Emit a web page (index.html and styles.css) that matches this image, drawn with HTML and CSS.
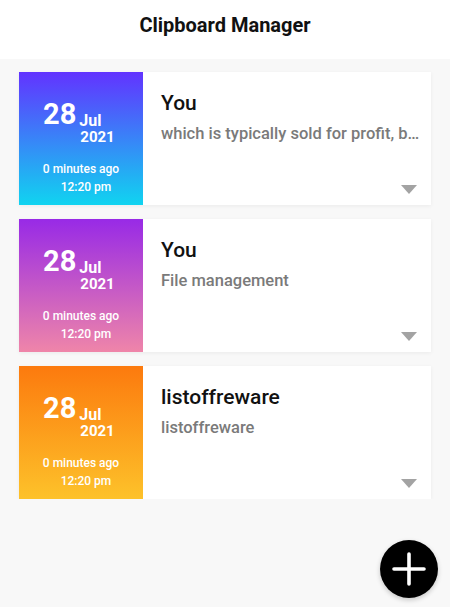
FILE: index.html
```html
<!DOCTYPE html>
<html lang="en">
<head>
    <meta charset="UTF-8">
    <meta name="viewport" content="width=device-width, initial-scale=1.0">
    <title>Clipboard Manager</title>
    <link rel="stylesheet" href="styles.css">
</head>
<body>

    <header>
        <h1>Clipboard Manager</h1>
    </header>

    <div class="list">
        <div class="card">
            <div class="stamp blue">
                <div class="date">
                    <span class="day">28</span>
                    <div class="month-year">
                        <span class="month">Jul</span>
                        <span class="year">2021</span>
                    </div>
                </div>
                <div class="ago">0 minutes ago</div>
                <div class="time">12:20 pm</div>
            </div>
            <div class="content">
                <div class="title">You</div>
                <div class="text">which is typically sold for profit, but can be distributed for free</div>
                <span class="arrow"></span>
            </div>
        </div>

        <div class="card">
            <div class="stamp pink">
                <div class="date">
                    <span class="day">28</span>
                    <div class="month-year">
                        <span class="month">Jul</span>
                        <span class="year">2021</span>
                    </div>
                </div>
                <div class="ago">0 minutes ago</div>
                <div class="time">12:20 pm</div>
            </div>
            <div class="content">
                <div class="title">You</div>
                <div class="text">File management</div>
                <span class="arrow"></span>
            </div>
        </div>

        <div class="card">
            <div class="stamp orange">
                <div class="date">
                    <span class="day">28</span>
                    <div class="month-year">
                        <span class="month">Jul</span>
                        <span class="year">2021</span>
                    </div>
                </div>
                <div class="ago">0 minutes ago</div>
                <div class="time">12:20 pm</div>
            </div>
            <div class="content">
                <div class="title">listoffreware</div>
                <div class="text">listoffreware</div>
                <span class="arrow"></span>
            </div>
        </div>
    </div>

    <button class="fab" aria-label="Add">
        <svg width="34" height="34" viewBox="0 0 34 34">
            <path d="M17 2 V32 M2 17 H32" stroke="white" stroke-width="3.6" stroke-linecap="round" fill="none"/>
        </svg>
    </button>

</body>
</html>
```

FILE: styles.css
```css
body {
    font-family: Roboto, "Liberation Sans", sans-serif;
    background-color: #f8f8f8;
    margin: 0;
}
header {
    height: 59px;
    box-sizing: border-box;
    padding-top: 13px;
    background-color: white;
}
h1 {
    margin: 0;
    text-align: center;
    font-size: 20px;
    line-height: 24px;
    font-weight: bold;
    color: #111;
}
.list {
    display: flex;
    flex-direction: column;
    gap: 14px;
    padding: 13px 19px 0;
}
.card {
    display: flex;
    height: 133px;
    background-color: white;
    box-shadow: 0 1px 4px rgba(0, 0, 0, 0.06);
}
.stamp {
    width: 124px;
    flex-shrink: 0;
    box-sizing: border-box;
    padding-top: 28px;
    color: white;
}
.blue {
    background: linear-gradient(to bottom, #6233ff, #10d4f0);
}
.pink {
    background: linear-gradient(to bottom, #982ae6, #ef85a9);
}
.orange {
    background: linear-gradient(to bottom, #fc7a0e, #fdc22a);
}
.date {
    display: flex;
    padding-left: 24px;
}
.day {
    font-size: 29px;
    line-height: 28px;
    font-weight: bold;
}
.month-year {
    display: flex;
    flex-direction: column;
    padding-top: 12px;
    margin-left: 3px;
    font-weight: bold;
}
.month {
    font-size: 16px;
    line-height: 17px;
}
.year {
    font-size: 15px;
    line-height: 16px;
    margin-left: 1px;
}
.ago {
    margin-top: 15px;
    text-align: center;
    font-size: 12px;
    line-height: 18px;
    font-weight: 500;
}
.time {
    text-align: center;
    padding-left: 10px;
    font-size: 12px;
    line-height: 18px;
    font-weight: 500;
}
.content {
    flex: 1;
    min-width: 0;
    display: flex;
    flex-direction: column;
    padding: 19px 6px 11px 18px;
}
.title {
    font-size: 21px;
    line-height: 24px;
    font-weight: 500;
    color: #111;
}
.text {
    margin-top: 8px;
    font-size: 16.5px;
    line-height: 22px;
    font-weight: 500;
    color: #7a7a7a;
    white-space: nowrap;
    overflow: hidden;
    text-overflow: ellipsis;
}
.arrow {
    margin-top: auto;
    align-self: flex-end;
    margin-right: 8px;
    width: 0;
    height: 0;
    border-left: 8px solid transparent;
    border-right: 8px solid transparent;
    border-top: 9px solid #a3a3a3;
}
.fab {
    position: fixed;
    right: 12px;
    bottom: 9px;
    width: 58px;
    height: 58px;
    border: none;
    border-radius: 50%;
    background-color: black;
    box-shadow: 0 2px 5px rgba(0, 0, 0, 0.2);
    display: flex;
    align-items: center;
    justify-content: center;
    padding: 0;
    cursor: pointer;
}
```
